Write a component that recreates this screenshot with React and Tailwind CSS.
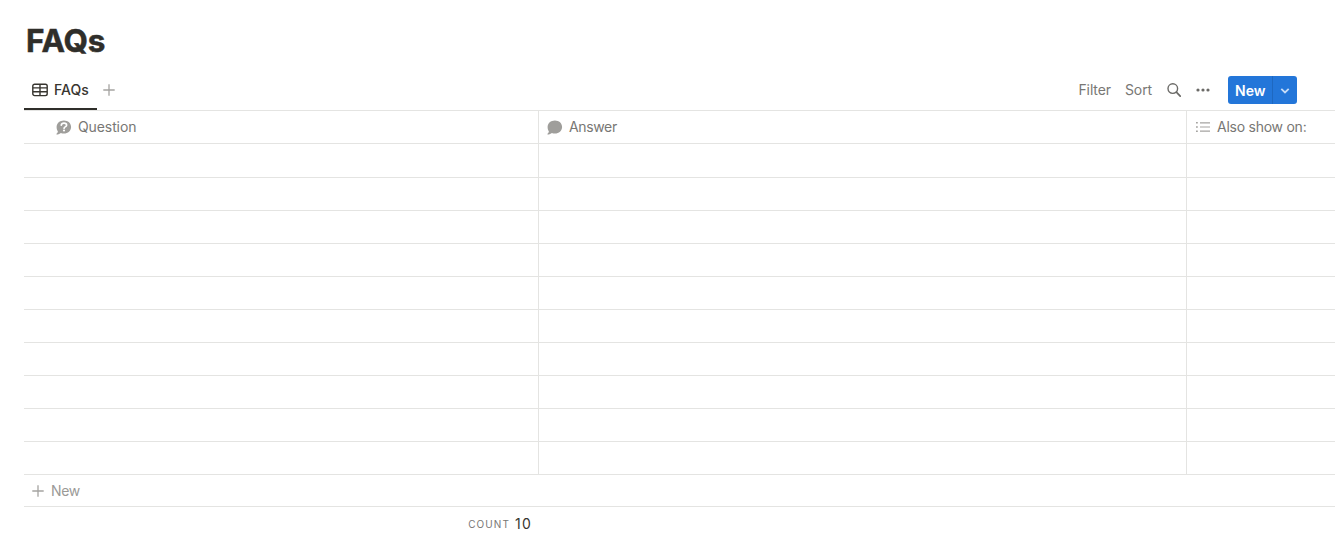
const rows = Array.from({ length: 10 }, (_, i) => i);

function TableIcon() {
  return (
    <svg viewBox="0 0 16 14" className="w-4 h-3.5 shrink-0" fill="none" stroke="#37352f" strokeWidth="1.4">
      <rect x="0.8" y="1.2" width="14.4" height="11.4" rx="1.8" />
      <path d="M1 4.9h14M1 8.7h14M8 1.2v11.4" />
    </svg>
  );
}

function PlusIcon({ className }) {
  return (
    <svg viewBox="0 0 12 12" className={className} fill="none" stroke="currentColor" strokeWidth="1.3">
      <path d="M6 0.3v11.4M0.3 6h11.4" />
    </svg>
  );
}

function SearchIcon() {
  return (
    <svg viewBox="0 0 14 14" className="w-3.5 h-3.5" fill="none" stroke="#6b6a67" strokeWidth="1.4" strokeLinecap="round">
      <circle cx="5.8" cy="5.6" r="4.8" />
      <path d="M9.4 9.2l3.8 3.9" strokeWidth="1.7" />
    </svg>
  );
}

function DotsIcon() {
  return (
    <svg viewBox="0 0 14 4" className="w-3.5 h-1" fill="#6b6a67">
      <circle cx="2" cy="2" r="1.6" />
      <circle cx="7" cy="2" r="1.6" />
      <circle cx="12" cy="2" r="1.6" />
    </svg>
  );
}

function BubbleIcon({ question }) {
  return (
    <svg viewBox="0 0 16 15" className="w-4 h-[15px] shrink-0">
      <path
        d="M7.9 0.4c4.1 0 7.2 2.8 7.2 6.5s-3.1 6.6-7.2 6.6c-1.1 0-2.1-.2-3-.6-1 .9-2.5 1.5-4.2 1.5-.4 0-.5-.4-.2-.6.8-.6 1.3-1.4 1.4-2.4C1.1 10.2.6 8.7.6 6.9.6 3.2 3.8.4 7.9.4z"
        fill="#9f9e9b"
      />
      {question && (
        <>
          <path d="M5.3 5.2c.2-1.4 1.2-2 2.7-2s2.6.8 2.6 2c0 1.7-2.5 1.6-2.5 3" fill="none" stroke="#fff" strokeWidth="1.7" strokeLinecap="round" />
          <circle cx="8" cy="10.5" r="1.1" fill="#fff" />
        </>
      )}
    </svg>
  );
}

function ListIcon() {
  return (
    <svg viewBox="0 0 14 12" className="w-3.5 h-3 shrink-0" fill="#a5a4a1">
      <path d="M0 1h1.8v1.6H0zM0 5.2h1.8v1.6H0zM0 9.4h1.8V11H0zM4 1.2h10v1.2H4zM4 5.4h10v1.2H4zM4 9.6h10v1.2H4z" />
    </svg>
  );
}

export default function App() {
  return (
    <div className="w-full h-[555px] overflow-hidden bg-white pl-6 font-['Inter',sans-serif] text-sm text-[#787774]">
      <h1 className="h-[70px] pt-5 pl-0.5 text-[31.5px] leading-[41px] font-bold tracking-[-0.2px] text-[#2f2e2a] [-webkit-text-stroke:0.5px_#2f2e2a]">
        FAQs
      </h1>

      {/* View tabs + toolbar */}
      <div className="flex h-[41px] justify-between border-b border-[#e4e4e2]">
        <div className="flex h-10">
          <div className="flex w-[73px] items-center gap-1.5 border-b-2 border-[#2f2e2a] pl-2 pt-0.5 font-medium text-[#37352f]">
            <TableIcon />
            <span>FAQs</span>
          </div>
          <div className="flex items-center pl-1.5 text-[#a5a4a1]">
            <PlusIcon className="w-3 h-3" />
          </div>
        </div>
        <div className="flex h-10 items-center pr-[38px]">
          <span className="mr-3.5 tracking-[-0.1px]">Filter</span>
          <span className="mr-[15px] tracking-[-0.1px]">Sort</span>
          <SearchIcon />
          <div className="ml-[15px] mr-[18px]">
            <DotsIcon />
          </div>
          <div className="flex h-7 w-[69px] overflow-hidden rounded-[3px] bg-[#2376d9] font-semibold text-white">
            <div className="flex w-[45px] items-center border-r border-[#1e68c0] pl-[7px] pt-px">New</div>
            <div className="flex flex-1 items-center justify-center pt-0.5">
              <svg viewBox="0 0 10 6" className="w-2.5 h-1.5" fill="none" stroke="#c3daf6" strokeWidth="1.8">
                <path d="M1.3 0.8l3.7 3.7 3.7-3.7" />
              </svg>
            </div>
          </div>
        </div>
      </div>

      {/* Table */}
      <div className="grid grid-cols-[515px_648px_1fr] h-[33px] border-b border-[#e4e4e2]">
        <div className="flex items-center gap-1.5 border-r border-[#e4e4e2] pl-8">
          <BubbleIcon question />
          <span className="tracking-[-0.1px]">Question</span>
        </div>
        <div className="flex items-center gap-1.5 border-r border-[#e4e4e2] pl-2">
          <BubbleIcon />
          <span className="tracking-[-0.35px]">Answer</span>
        </div>
        <div className="flex items-center gap-[7px] pl-[9px]">
          <ListIcon />
          <span className="tracking-[-0.25px]">Also show on:</span>
        </div>
      </div>
      {rows.map((row) => (
        <div
          key={row}
          className={`grid grid-cols-[515px_648px_1fr] border-b border-[#e4e4e2] ${row === 0 ? "h-[34px]" : "h-[33px]"}`}
        >
          <div className="border-r border-[#e4e4e2]" />
          <div className="border-r border-[#e4e4e2]" />
          <div />
        </div>
      ))}
      <div className="flex h-8 items-center gap-[7px] border-b border-[#e4e4e2] pl-2 text-[#9b9a97]">
        <PlusIcon className="w-3 h-3 text-[#a5a4a1]" />
        <span className="tracking-[-0.3px]">New</span>
      </div>
      <div className="flex h-[34px] w-[515px] items-center justify-end gap-[5px] pr-[7px]">
        <span className="text-[10px] tracking-[1.1px]">COUNT</span>
        <span className="text-sm text-[#37352f] tracking-[1.2px]">10</span>
      </div>
    </div>
  );
}
